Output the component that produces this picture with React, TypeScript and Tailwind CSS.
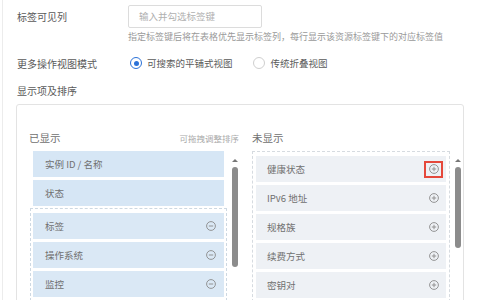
import React from "react";

const font = { fontFamily: '"Noto Sans CJK SC", "Noto Sans", sans-serif' };

function CircleIcon({ plus }: { plus?: boolean }) {
  return (
    <svg width="10" height="10" viewBox="0 0 10 10" fill="none">
      <circle cx="5" cy="5" r="4.4" stroke="#8a8a8a" strokeWidth="0.9" />
      <line x1="2.8" y1="5" x2="7.2" y2="5" stroke="#8a8a8a" strokeWidth="0.9" />
      {plus && <line x1="5" y1="2.8" x2="5" y2="7.2" stroke="#8a8a8a" strokeWidth="0.9" />}
    </svg>
  );
}

function Scrollbar({ thumb }: { thumb: number }) {
  return (
    <div className="flex flex-col items-center w-[6px] pt-[8px]">
      <div className="w-0 h-0 border-l-[3px] border-r-[3px] border-b-[3px] border-l-transparent border-r-transparent border-b-[#777]" />
      <div className="w-[6px] mt-[5px] rounded-full bg-[#8c8c8c]" style={{ height: thumb }} />
    </div>
  );
}

export default function App() {
  const leftLocked = ["实例 ID / 名称", "状态"];
  const leftItems = ["标签", "操作系统", "监控"];
  const rightItems = ["健康状态", "IPv6 地址", "规格族", "续费方式", "密钥对"];
  return (
    <div className="w-[480px] h-[300px] overflow-hidden bg-white relative text-[#555]" style={font}>
      <div className="absolute left-[2px] top-0 bottom-0 w-px bg-[#ececec]" />
      <div className="pl-[17px] pt-[5px]">
        <div className="flex items-center">
          <div className="w-[111px] text-[10px] leading-[23px] text-[#5a5a5a]">标签可见列</div>
          <div className="w-[134px] h-[23px] border border-[#dcdcdc] rounded-[2px] pl-[10px] flex items-center text-[9.5px] text-[#b0b0b0]">
            输入并勾选标签键
          </div>
        </div>
        <div className="ml-[111px] mt-[3px] text-[9px] leading-[12px] text-[#9a9a9a] whitespace-nowrap">
          指定标签键后将在表格优先显示标签列，每行显示该资源标签键下的对应标签值
        </div>
        <div className="flex items-center mt-[13px] h-[14px]">
          <div className="w-[113px] text-[10px] text-[#5a5a5a]">更多操作视图模式</div>
          <div className="w-[12px] h-[12px] rounded-full border-[1.5px] border-[#2b72d8] flex items-center justify-center">
            <div className="w-[5px] h-[5px] rounded-full bg-[#2b72d8]" />
          </div>
          <div className="ml-[5px] text-[9.5px] text-[#5a5a5a]">可搜索的平铺式视图</div>
          <div className="ml-[20px] w-[12px] h-[12px] rounded-full border border-[#cfcfcf]" />
          <div className="ml-[6px] text-[9.5px] text-[#5a5a5a]">传统折叠视图</div>
        </div>
        <div className="mt-[14px] text-[10px] leading-[14px] text-[#5a5a5a]">显示项及排序</div>
        <div className="mt-[6px] ml-[-1px] w-[448px] h-[220px] border border-[#e3e3e3] rounded-[3px] pt-[26px] pl-[12px] flex">
          <div className="w-[210px] flex flex-col">
            <div className="flex justify-between items-center h-[14px]">
              <span className="text-[10.5px] text-[#707070]">已显示</span>
              <span className="text-[8.5px] text-[#aaa]">可拖拽调整排序</span>
            </div>
            <div className="flex mt-[6px]">
              <div className="w-[197px] ml-[1px] flex flex-col">
                {leftLocked.map((t) => (
                  <div key={t} className="mx-[3px] h-[26px] mb-[3px] bg-[#d6e6f5] pl-[12px] flex items-center text-[9.5px] text-[#707070]">
                    {t}
                  </div>
                ))}
                <div className="border border-dashed border-[#cdd8e2] px-[2px] pt-[4px] mt-[-1px]">
                  {leftItems.map((t) => (
                    <div key={t} className="h-[26px] mb-[3px] bg-[#dae8f5] pl-[12px] pr-[8px] flex items-center justify-between text-[9.5px] text-[#707070]">
                      <span>{t}</span>
                      <CircleIcon />
                    </div>
                  ))}
                </div>
              </div>
              <div className="ml-[5px]">
                <Scrollbar thumb={100} />
              </div>
            </div>
          </div>
          <div className="ml-[13px] w-[210px] flex flex-col">
            <div className="flex items-center h-[14px]">
              <span className="text-[10.5px] text-[#707070]">未显示</span>
            </div>
            <div className="flex mt-[6px]">
              <div className="w-[198px] border border-dashed border-[#d6dbe0] px-[3px] pt-[4px]">
                {rightItems.map((t, i) => (
                  <div key={t} className="h-[26px] mb-[3px] bg-[#eef1f5] pl-[11px] pr-[3px] flex items-center justify-between text-[9.5px] text-[#707070]">
                    <span>{t}</span>
                    <div className={"w-[19px] h-[17px] flex items-center justify-center " + (i === 0 ? "border-2 border-[#e5483b]" : "border-2 border-transparent")}>
                      <CircleIcon plus />
                    </div>
                  </div>
                ))}
              </div>
              <div className="ml-[5px]">
                <Scrollbar thumb={81} />
              </div>
            </div>
          </div>
        </div>
      </div>
    </div>
  );
}
